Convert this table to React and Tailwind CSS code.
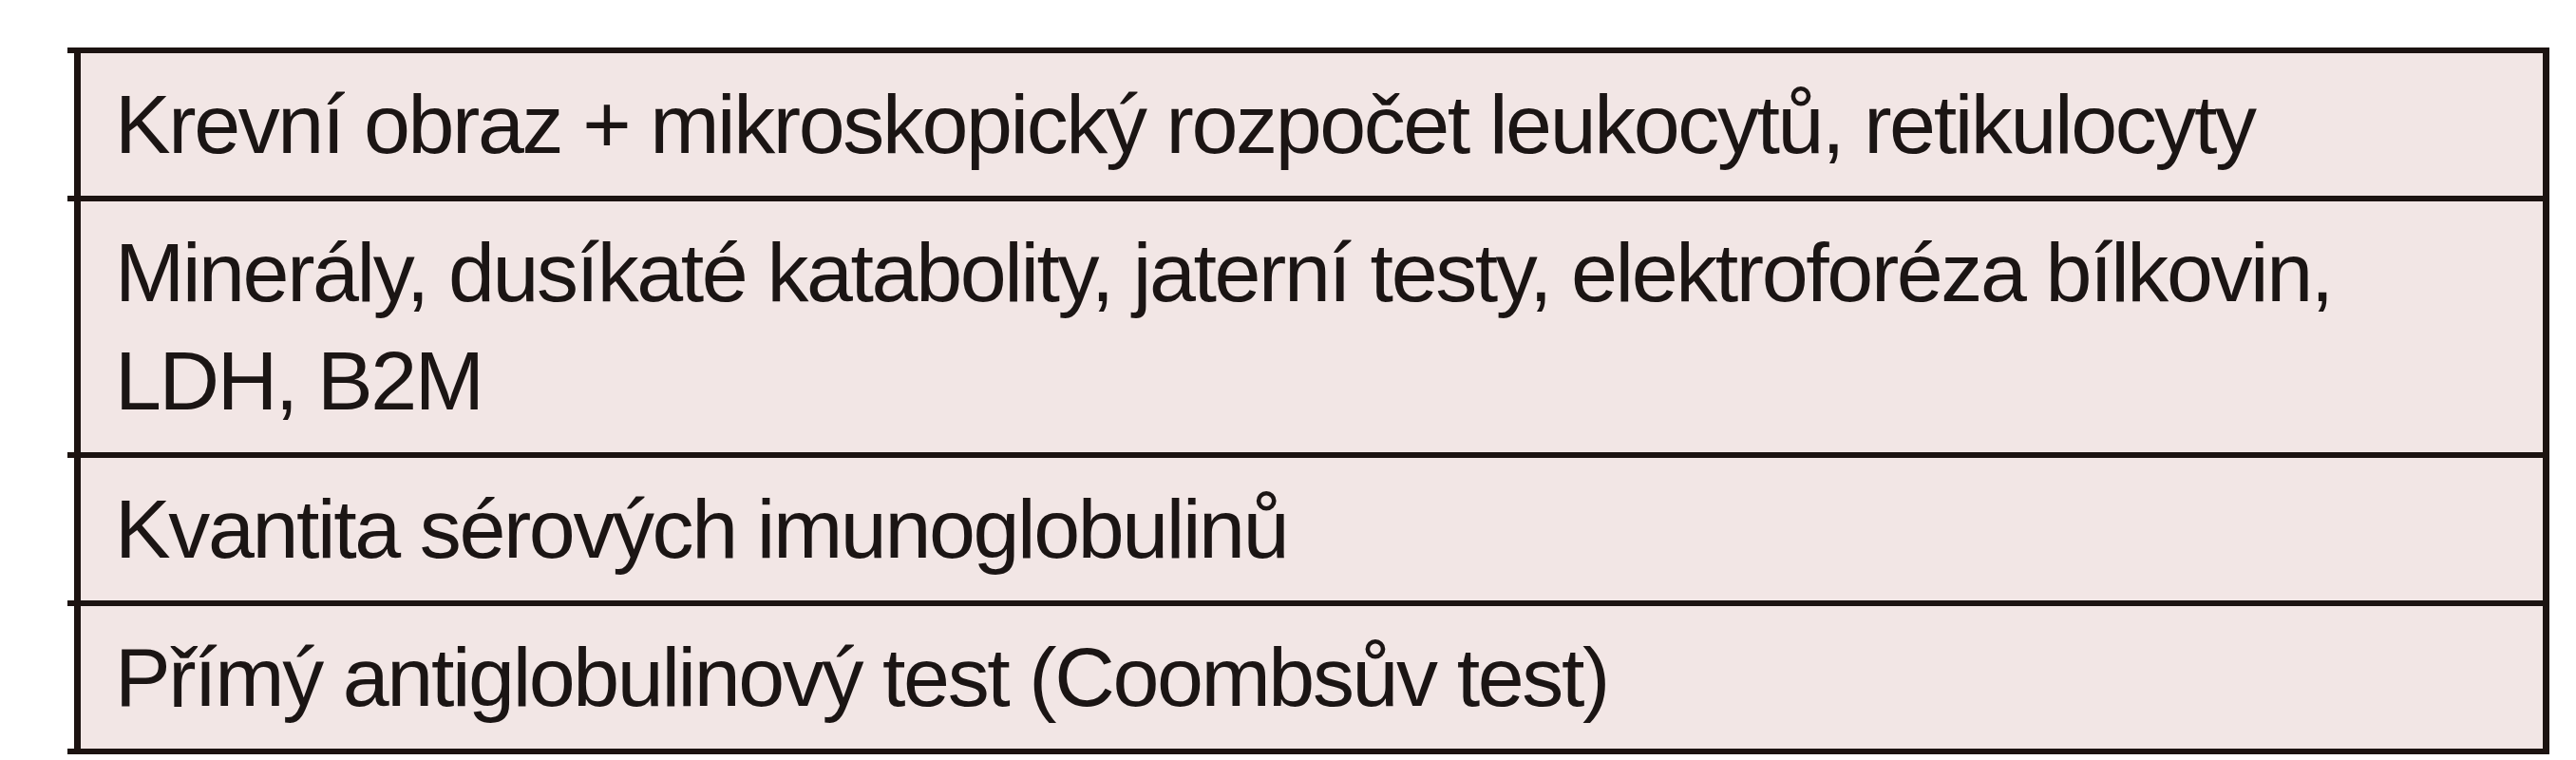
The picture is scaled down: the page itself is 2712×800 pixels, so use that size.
const rows = [
  ['Krevní obraz + mikroskopický rozpočet leukocytů, retikulocyty'],
  ['Minerály, dusíkaté katabolity, jaterní testy, elektroforéza bílkovin,', 'LDH, B2M'],
  ['Kvantita sérových imunoglobulinů'],
  ['Přímý antiglobulinový test (Coombsův test)'],
];

const Rule = () => <div className="h-[6px] bg-[#1c1311]" />;

export default function App() {
  return (
    <div className="h-[800px] w-[2712px] bg-white pt-[50px] font-['Liberation_Sans',Arial,sans-serif]">
      <div className="ml-[71px] w-[2613px]">
        <Rule />
        {rows.map((lines, i) => (
          <div key={i}>
            <div className="ml-[7px] border-x-[7px] border-[#1c1311] bg-[#f2e6e5] pl-[36px] pt-[18px] pb-[18px] text-[88px] leading-[114px] tracking-[-2.4px] text-[#1b1514]">
              {lines.map((line, j) => (
                <div key={j} className="whitespace-nowrap">{line}</div>
              ))}
            </div>
            <Rule />
          </div>
        ))}
      </div>
    </div>
  );
}
